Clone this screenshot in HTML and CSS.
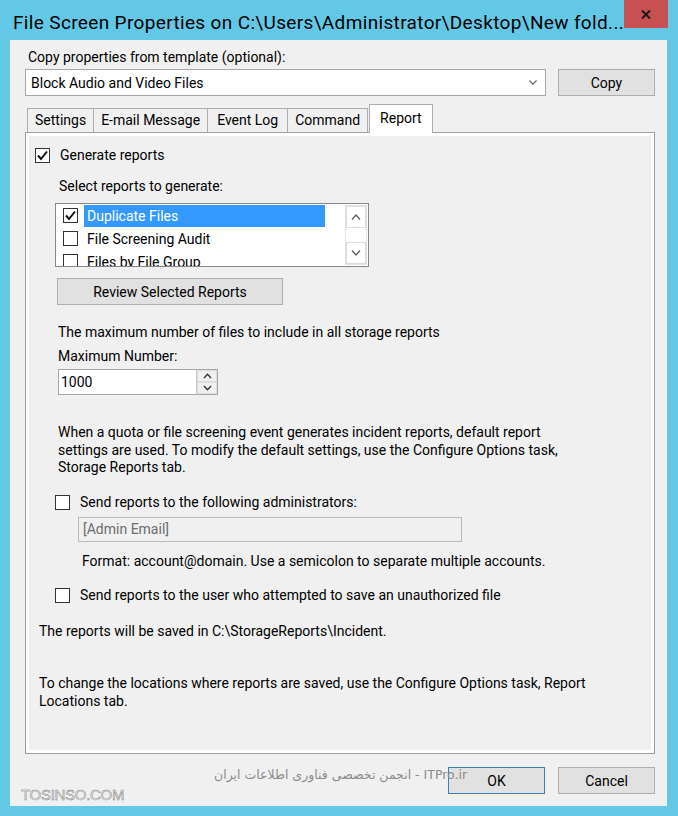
FILE: index.html
```html
<!DOCTYPE html>
<html lang="en">
<head>
    <meta charset="UTF-8">
    <title>File Screen Properties</title>
    <link rel="stylesheet" href="styles.css">
</head>
<body>
    <div class="titlebar">
        <div class="title">File Screen Properties on C:\Users\Administrator\Desktop\New fold...</div>
        <div class="close">
            <svg width="10" height="9" viewBox="0 0 10 9"><path d="M1 0.5 L9 8.5 M9 0.5 L1 8.5" stroke="#1a1a1a" stroke-width="2"/></svg>
        </div>
    </div>

    <div class="client">
        <div class="template-label">Copy properties from template (optional):</div>
        <div class="template-row">
            <div class="combo">
                <span>Block Audio and Video Files</span>
                <svg width="8" height="5" viewBox="0 0 8 5"><path d="M0.5 0.5 L4 4.2 L7.5 0.5" fill="none" stroke="#666" stroke-width="1.2"/></svg>
            </div>
            <button class="btn">Copy</button>
        </div>

        <div class="tabs">
            <div class="tab">Settings</div>
            <div class="tab">E-mail Message</div>
            <div class="tab">Event Log</div>
            <div class="tab">Command</div>
            <div class="tab active">Report</div>
        </div>

        <div class="panel">
            <div class="page">
                <div class="check-row gen">
                    <span class="box checked">
                        <svg width="13" height="13" viewBox="0 0 13 13"><path d="M2 6.5 L5 10 L11 2.5" fill="none" stroke="#111" stroke-width="2"/></svg>
                    </span>
                    <span>Generate reports</span>
                </div>

                <div class="text select-label">Select reports to generate:</div>

                <div class="listbox">
                    <div class="items">
                        <div class="item">
                            <span class="box checked">
                                <svg width="13" height="13" viewBox="0 0 13 13"><path d="M2 6.5 L5 10 L11 2.5" fill="none" stroke="#111" stroke-width="2"/></svg>
                            </span>
                            <span class="item-text selected">Duplicate Files</span>
                        </div>
                        <div class="item">
                            <span class="box"></span>
                            <span class="item-text">File Screening Audit</span>
                        </div>
                        <div class="item">
                            <span class="box"></span>
                            <span class="item-text">Files by File Group</span>
                        </div>
                    </div>
                    <div class="scrollbar">
                        <div class="arrow">
                            <svg width="10" height="6" viewBox="0 0 10 6"><path d="M1 5.5 L5 1 L9 5.5" fill="none" stroke="#606060" stroke-width="1.3"/></svg>
                        </div>
                        <div class="track"></div>
                        <div class="arrow">
                            <svg width="10" height="6" viewBox="0 0 10 6"><path d="M1 0.5 L5 5 L9 0.5" fill="none" stroke="#606060" stroke-width="1.3"/></svg>
                        </div>
                    </div>
                </div>

                <button class="btn review">Review Selected Reports</button>

                <div class="text max-text">The maximum number of files to include in all storage reports</div>
                <div class="text max-label">Maximum Number:</div>
                <div class="spin">
                    <span class="spin-value">1000</span>
                    <div class="spin-buttons">
                        <div class="spin-btn">
                            <svg width="9" height="6" viewBox="0 0 9 6"><path d="M1 5 L4.5 1.2 L8 5" fill="none" stroke="#333" stroke-width="1.4"/></svg>
                        </div>
                        <div class="spin-btn">
                            <svg width="9" height="6" viewBox="0 0 9 6"><path d="M1 1 L4.5 4.8 L8 1" fill="none" stroke="#333" stroke-width="1.4"/></svg>
                        </div>
                    </div>
                </div>

                <div class="text para">When a quota or file screening event generates incident reports, default report<br>settings are used. To modify the default settings, use the Configure Options task,<br>Storage Reports tab.</div>

                <div class="check-row admin">
                    <span class="box"></span>
                    <span>Send reports to the following administrators:</span>
                </div>
                <div class="email">[Admin Email]</div>
                <div class="text format">Format: account@domain. Use a semicolon to separate multiple accounts.</div>

                <div class="check-row user">
                    <span class="box"></span>
                    <span>Send reports to the user who attempted to save an unauthorized file</span>
                </div>

                <div class="text saved">The reports will be saved in C:\StorageReports\Incident.</div>
                <div class="text change">To change the locations where reports are saved, use the Configure Options task, Report<br>Locations tab.</div>
            </div>
        </div>

        <div class="footer">
            <button class="btn default">OK</button>
            <button class="btn">Cancel</button>
        </div>

        <div class="watermark-fa">انجمن تخصصی فناوری اطلاعات ایران - ITPro.ir</div>
        <div class="watermark-site">TOSINSO.COM</div>
    </div>
</body>
</html>
```

FILE: styles.css
```css
* {
    box-sizing: border-box;
}
html, body {
    margin: 0;
}
body {
    width: 678px;
    height: 816px;
    overflow: hidden;
    background-color: #63c8e6;
    font-family: Roboto, "Liberation Sans", sans-serif;
    font-size: 14px;
    color: #000;
}
.titlebar {
    height: 40px;
    display: flex;
    justify-content: space-between;
}
.title {
    padding: 11px 0 0 13px;
    font-size: 19px;
    line-height: 24px;
    letter-spacing: 0.35px;
    white-space: nowrap;
}
.close {
    width: 45px;
    height: 28px;
    margin-right: 10px;
    background-color: #c75050;
    display: flex;
    align-items: center;
    justify-content: center;
}
.client {
    position: relative;
    height: 766px;
    margin: 0 11px 0 10px;
    padding: 0 12px 0 15px;
    background-color: #f0f0f0;
}
.template-label {
    padding-top: 9px;
    margin-left: 3px;
    line-height: 17px;
}
.template-row {
    display: flex;
    gap: 12px;
    margin-top: 3px;
    height: 27px;
}
.combo {
    width: 521px;
    display: flex;
    align-items: center;
    justify-content: space-between;
    padding: 0 8px 0 5px;
    background-color: #fff;
    border: 1px solid #a6a6a6;
}
.btn {
    font-family: inherit;
    font-size: 14px;
    color: #000;
    background-color: #e1e1e1;
    border: 1px solid #adadad;
    width: 97px;
    height: 27px;
    padding: 0;
}
.tabs {
    display: flex;
    align-items: flex-end;
    height: 28px;
    margin-top: 8px;
    margin-left: 2px;
}
.tab {
    height: 24px;
    line-height: 23px;
    padding: 0 7px;
    border: 1px solid #acacac;
    border-bottom: none;
    margin-right: -1px;
    background-color: #f0f0f0;
}
.tab:nth-child(3) {
    padding: 0 9px;
}
.tab.active {
    position: relative;
    height: 29px;
    line-height: 27px;
    margin-left: 2px;
    margin-bottom: -1px;
    padding: 0 10px;
    background-color: #fff;
}
.panel {
    height: 622px;
    border: 1px solid #a0a0a0;
    background-color: #fff;
    padding: 3px;
}
.page {
    height: 100%;
    background-color: #f0f0f0;
    overflow: hidden;
}
.text {
    line-height: 17px;
    white-space: nowrap;
}
.check-row {
    display: flex;
    align-items: center;
    gap: 10px;
    height: 16px;
}
.box {
    width: 15px;
    height: 15px;
    flex: none;
    border: 1px solid #333;
    background-color: #fff;
    display: flex;
    align-items: center;
    justify-content: center;
}
.gen {
    margin: 11px 0 0 6px;
}
.select-label {
    margin: 15px 0 0 30px;
}
.listbox {
    display: flex;
    width: 314px;
    height: 64px;
    margin: 8px 0 0 26px;
    border: 1px solid #828790;
    background-color: #fff;
    overflow: hidden;
}
.items {
    flex: 1;
    padding: 0 0 0 7px;
}
.item {
    display: flex;
    align-items: center;
    gap: 6px;
    height: 23px;
}
.item-text {
    width: 241px;
    height: 22px;
    line-height: 22px;
    padding-left: 3px;
}
.item-text.selected {
    background-color: #3399ff;
    color: #fff;
}
.scrollbar {
    width: 22px;
    margin: 1px 1px 1px 0;
    display: flex;
    flex-direction: column;
    border: 1px solid #e2e2e2;
}
.arrow {
    height: 22px;
    display: flex;
    align-items: center;
    justify-content: center;
    border: 1px solid #dcdcdc;
}
.track {
    flex: 1;
}
.review {
    display: block;
    width: 226px;
    margin: 11px 0 0 28px;
}
.max-text {
    margin: 19px 0 0 29px;
}
.max-label {
    margin: 7px 0 0 29px;
}
.spin {
    display: flex;
    justify-content: space-between;
    width: 160px;
    height: 26px;
    margin: 4px 0 0 29px;
    border: 1px solid #a6a6a6;
    background-color: #fff;
}
.spin-value {
    padding-left: 2px;
    line-height: 24px;
}
.spin-buttons {
    width: 21px;
    display: flex;
    flex-direction: column;
    border-left: 1px solid #c8c8c8;
}
.spin-btn {
    flex: 1;
    display: flex;
    align-items: center;
    justify-content: center;
    background-color: #f0f0f0;
    border: 1px solid #dcdcdc;
}
.para {
    margin: 29px 0 0 29px;
    line-height: 17.5px;
}
.admin {
    margin: 17.5px 0 0 26px;
}
.email {
    width: 384px;
    height: 25px;
    margin: 7px 0 0 49px;
    padding-left: 4px;
    line-height: 23px;
    color: #6d6d6d;
    border: 1px solid #bcbcbc;
}
.format {
    margin: 11px 0 0 53px;
}
.user {
    margin: 17px 0 0 26px;
}
.saved {
    margin: 20px 0 0 10px;
}
.change {
    margin: 34px 0 0 10px;
    line-height: 18px;
}
.footer {
    display: flex;
    justify-content: flex-end;
    gap: 13px;
    margin-top: 13px;
}
.btn.default {
    border-color: #3c7fb1;
}
.watermark-fa {
    position: absolute;
    left: 204px;
    top: 727px;
    font-family: "DejaVu Sans", sans-serif;
    font-size: 12.5px;
    line-height: 16px;
    color: #8c8c8c;
    white-space: nowrap;
}
.watermark-site {
    position: absolute;
    left: 11px;
    top: 747px;
    font-family: "Liberation Sans", sans-serif;
    font-size: 15px;
    line-height: 16px;
    letter-spacing: -0.3px;
    color: #f2f2f2;
    -webkit-text-stroke: 0.45px #6f6f6f;
}
```
